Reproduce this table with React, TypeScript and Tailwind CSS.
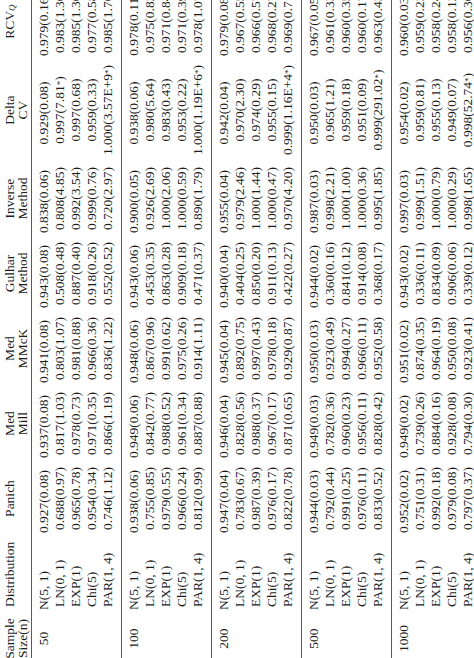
import React from "react";

type Row = [string, string, string, string, string, string, string, string];
type Group = { n: string; rows: Row[] };

const groups: Group[] = [
  {
    n: "50",
    rows: [
      ["N(5, 1)", "0.927(0.08)", "0.937(0.08)", "0.941(0.08)", "0.943(0.08)", "0.838(0.06)", "0.929(0.08)", "0.979(0.16)"],
      ["LN(0, 1)", "0.688(0.97)", "0.817(1.03)", "0.803(1.07)", "0.508(0.48)", "0.808(4.85)", "0.997(7.81*)", "0.983(1.30)"],
      ["EXP(1)", "0.965(0.78)", "0.978(0.73)", "0.981(0.88)", "0.887(0.40)", "0.992(3.54)", "0.997(0.68)", "0.985(1.30)"],
      ["Chi(5)", "0.954(0.34)", "0.971(0.35)", "0.966(0.36)", "0.918(0.26)", "0.999(0.76)", "0.959(0.33)", "0.977(0.58)"],
      ["PAR(1, 4)", "0.746(1.12)", "0.866(1.19)", "0.836(1.22)", "0.552(0.52)", "0.720(2.97)", "1.000(3.57E+9*)", "0.985(1.70)"],
    ],
  },
  {
    n: "100",
    rows: [
      ["N(5, 1)", "0.938(0.06)", "0.949(0.06)", "0.948(0.06)", "0.943(0.06)", "0.900(0.05)", "0.938(0.06)", "0.978(0.11)"],
      ["LN(0, 1)", "0.755(0.85)", "0.842(0.77)", "0.867(0.96)", "0.453(0.35)", "0.926(2.69)", "0.980(5.64)", "0.975(0.82)"],
      ["EXP(1)", "0.979(0.55)", "0.988(0.52)", "0.991(0.62)", "0.863(0.28)", "1.000(2.06)", "0.983(0.43)", "0.971(0.84)"],
      ["Chi(5)", "0.966(0.24)", "0.961(0.34)", "0.975(0.26)", "0.909(0.18)", "1.000(0.59)", "0.953(0.22)", "0.971(0.39)"],
      ["PAR(1, 4)", "0.812(0.99)", "0.887(0.88)", "0.914(1.11)", "0.471(0.37)", "0.890(1.79)", "1.000(1.19E+6*)", "0.978(1.07)"],
    ],
  },
  {
    n: "200",
    rows: [
      ["N(5, 1)", "0.947(0.04)", "0.946(0.04)", "0.945(0.04)", "0.940(0.04)", "0.955(0.04)", "0.942(0.04)", "0.979(0.08)"],
      ["LN(0, 1)", "0.783(0.67)", "0.828(0.56)", "0.892(0.75)", "0.404(0.25)", "0.979(2.46)", "0.970(2.30)", "0.967(0.55)"],
      ["EXP(1)", "0.987(0.39)", "0.988(0.37)", "0.997(0.43)", "0.850(0.20)", "1.000(1.44)", "0.974(0.29)", "0.966(0.57)"],
      ["Chi(5)", "0.976(0.17)", "0.967(0.17)", "0.978(0.18)", "0.911(0.13)", "1.000(0.47)", "0.955(0.15)", "0.968(0.27)"],
      ["PAR(1, 4)", "0.822(0.78)", "0.871(0.65)", "0.929(0.87)", "0.422(0.27)", "0.970(4.20)", "0.999(1.16E+4*)", "0.969(0.71)"],
    ],
  },
  {
    n: "500",
    rows: [
      ["N(5, 1)", "0.944(0.03)", "0.949(0.03)", "0.950(0.03)", "0.944(0.02)", "0.987(0.03)", "0.950(0.03)", "0.967(0.05)"],
      ["LN(0, 1)", "0.792(0.44)", "0.782(0.36)", "0.923(0.49)", "0.360(0.16)", "0.998(2.21)", "0.965(1.21)", "0.961(0.33)"],
      ["EXP(1)", "0.991(0.25)", "0.960(0.23)", "0.994(0.27)", "0.841(0.12)", "1.000(1.00)", "0.959(0.18)", "0.960(0.35)"],
      ["Chi(5)", "0.976(0.11)", "0.956(0.11)", "0.966(0.11)", "0.914(0.08)", "1.000(0.36)", "0.951(0.09)", "0.960(0.17)"],
      ["PAR(1, 4)", "0.833(0.52)", "0.828(0.42)", "0.952(0.58)", "0.368(0.17)", "0.995(1.85)", "0.999(291.02*)", "0.963(0.43)"],
    ],
  },
  {
    n: "1000",
    rows: [
      ["N(5, 1)", "0.952(0.02)", "0.949(0.02)", "0.951(0.02)", "0.943(0.02)", "0.997(0.03)", "0.954(0.02)", "0.960(0.03)"],
      ["LN(0, 1)", "0.751(0.31)", "0.739(0.26)", "0.874(0.35)", "0.336(0.11)", "0.999(1.51)", "0.959(0.81)", "0.959(0.23)"],
      ["EXP(1)", "0.992(0.18)", "0.884(0.16)", "0.964(0.19)", "0.834(0.09)", "1.000(0.79)", "0.955(0.13)", "0.958(0.24)"],
      ["Chi(5)", "0.979(0.08)", "0.928(0.08)", "0.950(0.08)", "0.906(0.06)", "1.000(0.29)", "0.949(0.07)", "0.958(0.12)"],
      ["PAR(1, 4)", "0.797(0.37)", "0.794(0.30)", "0.923(0.41)", "0.339(0.12)", "0.998(1.65)", "0.998(52.74*)", "0.956(0.30)"],
    ],
  },
];

// value columns: Panich, Med Mill, Med MMcK, Gulhar, Inverse, Delta CV, RCV_Q
const valCols = [
  "w-[63px] ml-[12px]",
  "w-[63px] ml-[12px]",
  "w-[63px] ml-[12px]",
  "w-[63px] ml-[12px]",
  "w-[63px] ml-[12px]",
  "w-[90px] ml-[12px]",
  "w-[63px] ml-[12px]",
];

function Val({ v }: { v: string }) {
  if (v.includes("*")) {
    const i = v.indexOf("*");
    return (
      <span>
        {v.slice(0, i)}
        <sup className="text-[9px] relative -top-[1px]">*</sup>
        {v.slice(i + 1)}
      </span>
    );
  }
  return <span>{v}</span>;
}

function Cell({ cls, children }: { cls: string; children: React.ReactNode }) {
  return (
    <div className={`${cls} shrink-0 flex justify-center whitespace-nowrap`}>{children}</div>
  );
}

function HeadCell({ cls, l1, l2 }: { cls: string; l1: React.ReactNode; l2?: React.ReactNode }) {
  return (
    <div className={`${cls} shrink-0 flex flex-col items-center whitespace-nowrap`}>
      <div className="h-[13px] leading-[13px]">{l1}</div>
      <div className="h-[13px] leading-[13px]">{l2 ?? ""}</div>
    </div>
  );
}

export default function App() {
  return (
    <div className="w-[474px] h-[658px] overflow-hidden bg-white">
      <div
        className="w-[658px] h-[474px] origin-top-left [transform:translateY(658px)_rotate(-90deg)] text-[13.5px] text-[#1c1c1c]"
        style={{ fontFamily: '"Liberation Serif", "Times New Roman", serif' }}
      >
        {/* header */}
        <div className="flex pt-[3px] pb-[2px]">
          <HeadCell cls="w-[39px]" l1="Sample" l2="Size(n)" />
          <div className="w-[65px] ml-[12px] shrink-0 flex flex-col whitespace-nowrap">
            <div className="h-[13px] leading-[13px]">Distribution</div>
            <div className="h-[13px]" />
          </div>
          <HeadCell cls={valCols[0]} l1="Panich" />
          <HeadCell cls={valCols[1]} l1="Med" l2="Mill" />
          <HeadCell cls={valCols[2]} l1="Med" l2="MMcK" />
          <HeadCell cls={valCols[3]} l1="Gulhar" l2="Method" />
          <HeadCell cls={valCols[4]} l1="Inverse" l2="Method" />
          <HeadCell cls={valCols[5]} l1="Delta" l2="CV" />
          <HeadCell
            cls={valCols[6]}
            l1={
              <span>
                RCV<sub className="text-[9px] italic relative top-[1px]">Q</sub>
              </span>
            }
          />
        </div>
        <div className="h-[1px] bg-[#5a5a5a]" />
        {groups.map((g, gi) => (
          <div key={g.n}>
            <div className="pt-[4px] pb-[5px]">
              {g.rows.map((r, ri) => (
                <div key={ri} className="flex h-[16px] leading-[16px]">
                  <Cell cls="w-[39px]">{ri === 0 ? g.n : ""}</Cell>
                  <div
                    className={`w-[65px] shrink-0 whitespace-nowrap ${ri === 0 ? "ml-[9px] pl-0" : "ml-[12px]"}`}
                  >
                    {r[0]}
                  </div>
                  {r.slice(1).map((v, vi) => (
                    <Cell key={vi} cls={valCols[vi]}>
                      <Val v={v} />
                    </Cell>
                  ))}
                </div>
              ))}
            </div>
            {gi < groups.length - 1 && <div className="h-[1px] bg-[#5a5a5a]" />}
          </div>
        ))}
      </div>
    </div>
  );
}
